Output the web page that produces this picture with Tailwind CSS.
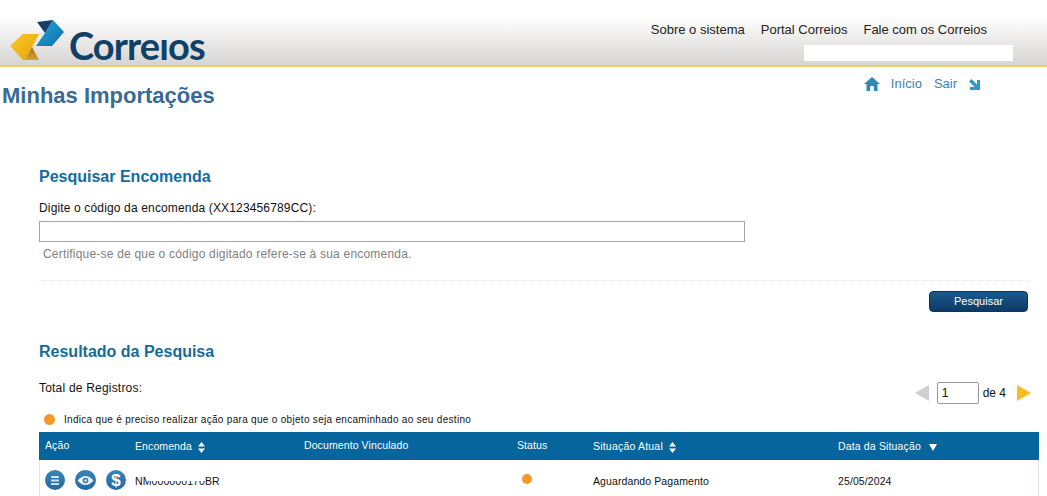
<!DOCTYPE html>
<html lang="pt-BR">
<head>
<meta charset="utf-8">
<title>Minhas Importações</title>
<script src="https://cdn.jsdelivr.net/npm/@tailwindcss/browser@4"></script>
</head>
<body class="bg-white font-['Liberation_Sans',Arial,sans-serif] text-black overflow-hidden">
<div class="w-[1047px] h-[496px] overflow-hidden">
  <header class="h-[67px] border-b-2 border-[#e8d06c] bg-gradient-to-b from-white from-[25%] to-[#d6d5d2] flex justify-between">
    <div class="flex items-start pl-[9px] pt-[19px]">
      <svg width="56" height="42" viewBox="0 0 56 42" class="shrink-0">
        <defs>
          <linearGradient id="lb" x1="0" y1="0" x2="1" y2="1"><stop offset="0" stop-color="#27a6e0"/><stop offset="1" stop-color="#0f6fa8"/></linearGradient>
          <linearGradient id="ye" x1="0" y1="0" x2="1" y2="1"><stop offset="0" stop-color="#f9c91e"/><stop offset="1" stop-color="#e8a313"/></linearGradient>
          <linearGradient id="br" x1="0" y1="0" x2="0" y2="1"><stop offset="0" stop-color="#9d7226"/><stop offset="1" stop-color="#dc9f2c"/></linearGradient>
        </defs>
        <polygon points="44,1 55,13 43,27 27,27 36,14" fill="url(#lb)"/>
        <polygon points="28,3 44,1 36,14" fill="#123f6d"/>
        <polygon points="14,15 30,15 23,28 16,41 14,41 1,27" fill="url(#ye)"/>
        <polygon points="16,41 30,41 23,28" fill="url(#br)"/>
      </svg>
      <span class="font-['Lato',sans-serif] text-[38px] leading-none font-bold text-[#0f4168] mt-[7px] ml-[4px] tracking-[-0.9px]">Correıos</span>
    </div>
    <div class="flex flex-col items-end pr-[34px] pt-[22px]">
      <nav class="flex gap-4 text-[13px] leading-4 text-[#222] mr-[26px]">
        <a>Sobre o sistema</a><a>Portal Correios</a><a>Fale com os Correios</a>
      </nav>
      <div class="w-[209px] h-[16px] bg-white mt-[7px]"></div>
    </div>
  </header>

  <div class="flex justify-between h-[98px]">
    <h1 class="font-bold text-[22px] leading-7 text-[#3a6a96] pl-[2px] pt-[15px]">Minhas Importações</h1>
    <div class="flex items-center h-[16px] mt-[9px] pr-[67px] text-[13px] text-[#3a82b2]">
      <svg width="16" height="14" viewBox="0 0 16 14" fill="#2f87bd" class="mr-[11px]"><path d="M8 0 L16 7 L13.5 7 L13.5 14 L9.8 14 L9.8 9 L6.2 9 L6.2 14 L2.5 14 L2.5 7 L0 7 Z"/></svg>
      <span>Início</span>
      <span class="ml-[12px]">Sair</span>
      <svg width="11" height="11" viewBox="0 0 11 11" fill="#2f9ad0" class="ml-[12px]"><path d="M0 2.5 L2.5 0 L8 5.5 L8 1 L11 1 L11 11 L1 11 L1 8 L5.5 8 Z"/></svg>
    </div>
  </div>

  <main class="pl-[39px] pr-[19px]">
    <h2 class="font-bold text-[16px] leading-5 text-[#146c9e] pt-[2px]">Pesquisar Encomenda</h2>
    <label class="block text-[12px] leading-4 text-[#111] mt-[13px] tracking-[0.15px]">Digite o código da encomenda (XX123456789CC):</label>
    <div class="w-[706px] h-[21px] border border-[#a5a5a5] bg-white mt-[5px]"></div>
    <p class="text-[12px] leading-4 text-[#808080] pl-[4px] mt-[4px] tracking-[0.2px]">Certifique-se de que o código digitado refere-se à sua encomenda.</p>

    <div class="border-t border-dotted border-[#e4e4e4] mt-[18px] h-[11px]"></div>
    <div class="flex justify-end">
      <button class="w-[99px] h-[21px] rounded-[4px] bg-gradient-to-b from-[#1b5a8c] to-[#0c3a66] border border-[#0c3358] text-white text-[11px] leading-none">Pesquisar</button>
    </div>

    <h2 class="font-bold text-[16px] leading-5 text-[#146c9e] mt-[30px]">Resultado da Pesquisa</h2>

    <div class="flex justify-between items-start mt-[18px] h-[32px]">
      <span class="text-[12px] leading-4 text-[#111] tracking-[0.2px]">Total de Registros:</span>
      <div class="flex items-center h-[22px] mt-[2px] mr-[-3px] text-[12px] text-[#111]">
        <svg width="14" height="16" viewBox="0 0 14 16" fill="#cfcfcf"><polygon points="14,0 14,16 0,8"/></svg>
        <div class="w-[42px] h-[22px] border border-[#999] rounded-[2px] ml-[8px] pl-[4px] leading-[21px]">1</div>
        <span class="ml-[4px]">de 4</span>
        <svg width="14" height="16" viewBox="0 0 14 16" fill="#f5bd1f" class="ml-[11px]"><polygon points="0,0 0,16 14,8"/></svg>
      </div>
    </div>

    <div class="flex items-center h-[14px] text-[10px] text-[#111] tracking-[0.3px]">
      <span class="w-[11px] h-[11px] rounded-full bg-[#f5982a] ml-[5px] mr-[9px]"></span>
      <span>Indica que é preciso realizar ação para que o objeto seja encaminhado ao seu destino</span>
    </div>

    <div class="mt-[6px] w-[1000px]">
      <div class="flex h-[28px] items-center bg-[#05659c] text-white text-[10.5px] tracking-[0.1px]">
        <div class="w-[96px] pl-[6px]">Ação</div>
        <div class="w-[169px] flex items-center gap-[6px] mt-[2px]">Encomenda
          <svg width="7" height="11" viewBox="0 0 7 11" fill="#fff"><polygon points="3.5,0 7,4.5 0,4.5"/><polygon points="3.5,11 7,6.5 0,6.5"/></svg>
        </div>
        <div class="w-[213px]">Documento Vinculado</div>
        <div class="w-[76px]">Status</div>
        <div class="w-[245px] flex items-center gap-[6px] mt-[2px] tracking-[0.2px]">Situação Atual
          <svg width="7" height="11" viewBox="0 0 7 11" fill="#fff"><polygon points="3.5,0 7,4.5 0,4.5"/><polygon points="3.5,11 7,6.5 0,6.5"/></svg>
        </div>
        <div class="flex-1 flex items-center gap-[8px] mt-[2px] tracking-[0.15px]">Data da Situação
          <svg width="8" height="7" viewBox="0 0 8 7" fill="#fff"><polygon points="0,0 8,0 4,7"/></svg>
        </div>
      </div>
      <div class="flex h-[40px] items-center border-x border-[#d9e6ee] text-[10.5px] text-[#111] tracking-[0.1px]">
        <div class="w-[95px] pl-[5px] flex items-center gap-[10px] h-full">
          <span class="w-[20px] h-[20px] rounded-full bg-gradient-to-b from-[#3a85ba] to-[#2468a0] flex items-center justify-center">
            <svg width="8" height="9" viewBox="0 0 8 9" fill="#cfe0ec"><rect y="0" width="8" height="2" rx="0.5"/><rect y="3.5" width="8" height="2" rx="0.5"/><rect y="7" width="8" height="2" rx="0.5"/></svg>
          </span>
          <span class="w-[21px] h-[20px] rounded-full bg-gradient-to-b from-[#3a85ba] to-[#2468a0] flex items-center justify-center">
            <svg width="17" height="11" viewBox="0 0 17 11"><path d="M0.5 5.5 Q8.5 -3.5 16.5 5.5 Q8.5 14.5 0.5 5.5Z" fill="#e6f0f6"/><circle cx="8.5" cy="5.5" r="2.8" fill="#2b78b0"/><circle cx="8.5" cy="5.5" r="1.2" fill="#e6f0f6"/></svg>
          </span>
          <span class="w-[20px] h-[20px] rounded-full bg-gradient-to-b from-[#3a85ba] to-[#2468a0] flex items-center justify-center text-white font-bold text-[17px] leading-none">$</span>
        </div>
        <div class="w-[169px] relative mt-[4px]">NM000000170BR
          <span class="absolute left-[12px] top-0 w-[58px] h-[7px] bg-white"></span>
        </div>
        <div class="w-[213px]"></div>
        <div class="w-[76px] pl-[5px] h-full pt-[14px]"><span class="block w-[10px] h-[10px] rounded-full bg-[#f5982a]"></span></div>
        <div class="w-[245px] mt-[4px]">Aguardando Pagamento</div>
        <div class="flex-1 mt-[4px]">25/05/2024</div>
      </div>
    </div>
  </main>
</div>
</body>
</html>
